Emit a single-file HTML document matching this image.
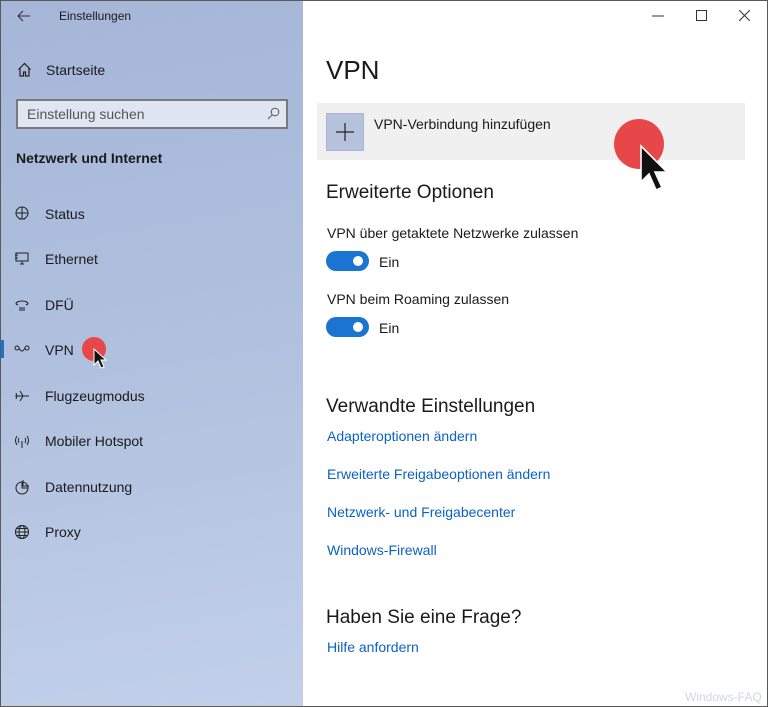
<!DOCTYPE html>
<html><head><meta charset="utf-8"><style>
*{margin:0;padding:0;box-sizing:border-box}
body{width:768px;height:707px;overflow:hidden;font-family:"Liberation Sans",sans-serif;background:#fff;position:relative}
.win{position:absolute;left:0;top:0;width:768px;height:707px;overflow:hidden}
.frame{position:absolute;left:0;top:0;width:768px;height:707px;border:1px solid #5a5a5a;pointer-events:none}
.side{position:absolute;left:0;top:0;width:303px;height:707px;background:linear-gradient(170deg,#a6b6d8 0%,#b0c0de 50%,#c2d0ea 100%)}
.t{position:absolute;white-space:nowrap;color:#1a1a1a}
.nav{position:absolute;left:14px;font-size:14px;color:#1a1a1a}
.nav svg{position:absolute;left:0;top:0}
.nav span{position:absolute;left:31px;top:0;white-space:nowrap}
.link{position:absolute;left:327px;font-size:14px;color:#0b62c4;white-space:nowrap}
.tog{position:absolute;left:326px;width:43px;height:20px;border-radius:10px;background:#1a74d2}
.tog:after{content:"";position:absolute;right:6px;top:5px;width:10px;height:10px;border-radius:50%;background:#fff}
</style></head><body><div class="win">
<div class="side">
<svg style="position:absolute;left:17px;top:10px" width="14" height="12" viewBox="0 0 14 12"><path d="M13 6H1M6 1L1 6l5 5" fill="none" stroke="#333" stroke-width="1.1"/></svg>
<div class="t" style="left:59px;top:9px;font-size:12px">Einstellungen</div>
<svg style="position:absolute;left:17px;top:62px" width="15" height="15" viewBox="0 0 15 15"><path d="M1.5 7.5L7.5 1.5l6 6M3 6v8h3.5v-4h2v4H12V6" fill="none" stroke="#222" stroke-width="1.2"/></svg>
<div class="t" style="left:46px;top:62px;font-size:14px">Startseite</div>
<div style="position:absolute;left:16px;top:99px;width:272px;height:30px;border:2px solid #7a7a7a;background:#dfe5f1"></div>
<div class="t" style="left:27px;top:106px;font-size:14px;color:#555">Einstellung suchen</div>
<svg style="position:absolute;left:267px;top:107px" width="13" height="13" viewBox="0 0 13 13"><circle cx="8" cy="5" r="3.8" fill="none" stroke="#555"/><path d="M5.3 7.7L1 12" stroke="#555"/></svg>
<div class="t" style="left:16px;top:150px;font-size:14px;font-weight:bold">Netzwerk und Internet</div>
<div class="nav" style="top:206px"><svg width="16" height="16" viewBox="0 0 16 16"><circle cx="8" cy="7" r="6" fill="none" stroke="#222"/><path d="M2 7h12M8 1v12M5 13h6" fill="none" stroke="#222"/></svg><span>Status</span></div>
<div class="nav" style="top:251px"><svg width="16" height="16" viewBox="0 0 16 16"><path d="M2 2h12v8H2zM6 13h4M8 10v3M1 4h3M1 7h3" fill="none" stroke="#222"/></svg><span>Ethernet</span></div>
<div class="nav" style="top:297px"><svg width="16" height="16" viewBox="0 0 16 16"><path d="M2 7c0-4 12-4 12 0l-2 1M2 7l2 1M5 11h6M5 13h6" fill="none" stroke="#222"/></svg><span>DFÜ</span></div>
<div style="position:absolute;left:0;top:340px;width:4px;height:18px;background:#1a74d2"></div>
<div class="nav" style="top:342px"><svg width="16" height="16" viewBox="0 0 16 16"><circle cx="3" cy="6" r="2" fill="none" stroke="#222"/><circle cx="13" cy="6" r="2" fill="none" stroke="#222"/><path d="M5 6c2 4 4 4 6 0" fill="none" stroke="#222"/></svg><span>VPN</span></div>
<div class="nav" style="top:388px"><svg width="16" height="16" viewBox="0 0 16 16"><path d="M1 8h14M6 3l3 5-3 5M2 5l1 3-1 3" fill="none" stroke="#222"/></svg><span>Flugzeugmodus</span></div>
<div class="nav" style="top:433px"><svg width="16" height="16" viewBox="0 0 16 16"><path d="M8 8v7M3 3c-2 3-2 6 0 9M13 3c2 3 2 6 0 9M5 5c-1 2-1 3 0 5M11 5c1 2 1 3 0 5" fill="none" stroke="#222"/></svg><span>Mobiler Hotspot</span></div>
<div class="nav" style="top:479px"><svg width="16" height="16" viewBox="0 0 16 16"><circle cx="8" cy="9" r="6" fill="none" stroke="#222"/><path d="M8 3v6h6M9 1v6h6" fill="none" stroke="#222"/></svg><span>Datennutzung</span></div>
<div class="nav" style="top:524px"><svg width="16" height="16" viewBox="0 0 16 16"><circle cx="8" cy="8" r="6.5" fill="none" stroke="#222"/><ellipse cx="8" cy="8" rx="3" ry="6.5" fill="none" stroke="#222"/><path d="M1.5 8h13M3 4.5h10M3 11.5h10" fill="none" stroke="#222"/></svg><span>Proxy</span></div>
<div style="position:absolute;left:82px;top:337px;width:24px;height:24px;border-radius:50%;background:#e8474a"></div>
<svg style="position:absolute;left:93px;top:348px" width="14" height="22" viewBox="0 0 14 22"><path d="M1 1v16l4-4 3 7 3-1-3-7h5z" fill="#111" stroke="#fff"/></svg>
</div>
<svg style="position:absolute;left:652px;top:15px" width="12" height="2"><path d="M0 1h12" stroke="#333"/></svg>
<svg style="position:absolute;left:696px;top:10px" width="11" height="11"><rect x=".5" y=".5" width="10" height="10" fill="none" stroke="#333"/></svg>
<svg style="position:absolute;left:739px;top:10px" width="11" height="11"><path d="M0 0l11 11M11 0L0 11" stroke="#333"/></svg>
<div class="t" style="left:326px;top:55px;font-size:26px">VPN</div>
<div style="position:absolute;left:317px;top:103px;width:428px;height:57px;background:#f0f0f0"></div>
<div style="position:absolute;left:326px;top:113px;width:38px;height:38px;background:#b6c2dc;border:1px solid #a9b6d2"></div>
<svg style="position:absolute;left:336px;top:123px" width="18" height="18"><path d="M9 0v18M0 9h18" stroke="#222" stroke-width="1.2"/></svg>
<div class="t" style="left:374px;top:116px;font-size:14px">VPN-Verbindung hinzufügen</div>
<div style="position:absolute;left:614px;top:119px;width:50px;height:50px;border-radius:50%;background:#e8474a"></div>
<svg style="position:absolute;left:639px;top:144px" width="30" height="50" viewBox="0 0 15 25"><path d="M1 1v18l4-4 3.5 8 3-1.3-3.5-7.7h6z" fill="#111" stroke="#fff" stroke-width=".8"/></svg>
<div class="t" style="left:326px;top:182px;font-size:19px">Erweiterte Optionen</div>
<div class="t" style="left:327px;top:225px;font-size:14px">VPN über getaktete Netzwerke zulassen</div>
<div class="tog" style="top:251px"></div><div class="t" style="left:379px;top:254px;font-size:14px">Ein</div>
<div class="t" style="left:327px;top:291px;font-size:14px">VPN beim Roaming zulassen</div>
<div class="tog" style="top:317px"></div><div class="t" style="left:379px;top:320px;font-size:14px">Ein</div>
<div class="t" style="left:326px;top:396px;font-size:19px">Verwandte Einstellungen</div>
<div class="link" style="top:428px">Adapteroptionen ändern</div>
<div class="link" style="top:466px">Erweiterte Freigabeoptionen ändern</div>
<div class="link" style="top:504px">Netzwerk- und Freigabecenter</div>
<div class="link" style="top:542px">Windows-Firewall</div>
<div class="t" style="left:326px;top:607px;font-size:19px">Haben Sie eine Frage?</div>
<div class="link" style="top:639px">Hilfe anfordern</div>
<div class="t" style="left:685px;top:690px;font-size:12px;color:#d0d6e6">Windows-FAQ</div>
</div><div class="frame"></div></body></html>
